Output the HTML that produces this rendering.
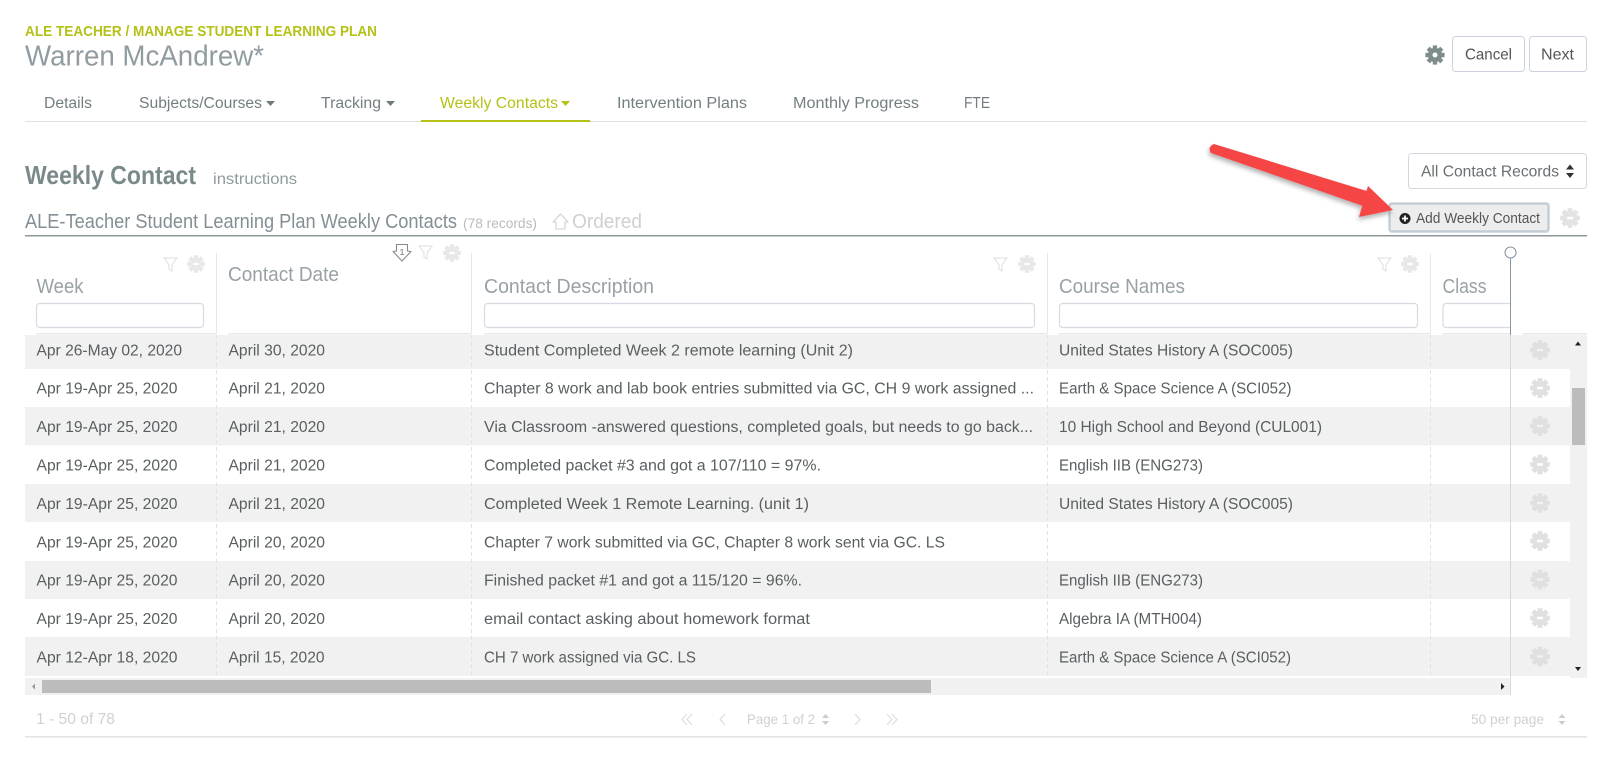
<!DOCTYPE html>
<html lang="en">
<head>
<meta charset="utf-8">
<title>Weekly Contact</title>
<style>
html,body{margin:0;padding:0;background:#fff;width:1600px;height:764px;overflow:hidden}
svg{display:block}
text{font-family:"Liberation Sans",Arial,sans-serif;white-space:pre}
.r{font-size:15.5px;fill:#595f61}
.h{font-size:20.5px;fill:#98a2a6}
.tab{font-size:15.5px;fill:#737e81}
.p{fill:#d0d0d0}
.inp{fill:#fff;stroke:#d5dbe3;stroke-width:1.2}
.fl{fill:none;stroke:#e2e4e4;stroke-width:1.2}
</style>
</head>
<body>
<svg xmlns="http://www.w3.org/2000/svg" width="1600" height="764" viewBox="0 0 1600 764">
<defs>
<symbol id="cog" viewBox="-10 -10 20 20" overflow="visible">
<circle r="4.8" fill="none" stroke="currentColor" stroke-width="4.6"/>
<g fill="currentColor">
<rect x="-2.2" y="-9.6" width="4.4" height="4"/>
<rect x="-2.2" y="-9.6" width="4.4" height="4" transform="rotate(45)"/>
<rect x="-2.2" y="-9.6" width="4.4" height="4" transform="rotate(90)"/>
<rect x="-2.2" y="-9.6" width="4.4" height="4" transform="rotate(135)"/>
<rect x="-2.2" y="-9.6" width="4.4" height="4" transform="rotate(180)"/>
<rect x="-2.2" y="-9.6" width="4.4" height="4" transform="rotate(225)"/>
<rect x="-2.2" y="-9.6" width="4.4" height="4" transform="rotate(270)"/>
<rect x="-2.2" y="-9.6" width="4.4" height="4" transform="rotate(315)"/>
</g>
</symbol>
<symbol id="cog2" viewBox="-10 -10 20 20" overflow="visible">
<path fill-rule="evenodd" fill="currentColor" d="M-7-7H7V7H-7ZM-3-1.200V1.200H3V-1.200Z" clip-path="circle(7.400px)"/>
<g fill="currentColor">
<rect x="-2.400" y="-9.800" width="4.800" height="4"/>
<rect x="-2.400" y="-9.800" width="4.800" height="4" transform="rotate(45)"/>
<rect x="-2.400" y="-9.800" width="4.800" height="4" transform="rotate(90)"/>
<rect x="-2.400" y="-9.800" width="4.800" height="4" transform="rotate(135)"/>
<rect x="-2.400" y="-9.800" width="4.800" height="4" transform="rotate(180)"/>
<rect x="-2.400" y="-9.800" width="4.800" height="4" transform="rotate(225)"/>
<rect x="-2.400" y="-9.800" width="4.800" height="4" transform="rotate(270)"/>
<rect x="-2.400" y="-9.800" width="4.800" height="4" transform="rotate(315)"/>
</g>
</symbol>
<filter id="sh" x="-10%" y="-20%" width="120%" height="150%"><feDropShadow dx="-1" dy="3" stdDeviation="2.500" flood-color="#000" flood-opacity=".3"/></filter>
</defs>

<!-- header -->
<text x="25" y="36" font-size="15" font-weight="700" fill="#b4c117" textLength="352" lengthAdjust="spacingAndGlyphs">ALE TEACHER / MANAGE STUDENT LEARNING PLAN</text>
<text x="25" y="65.500" font-size="29" fill="#909ca1" textLength="239" lengthAdjust="spacingAndGlyphs">Warren McAndrew*</text>

<use href="#cog" x="1425" y="45" width="20" height="20" color="#7f8c8d"/>
<rect x="1452.500" y="36.500" width="72" height="35" rx="3" fill="#fff" stroke="#ccd3dc"/>
<text x="1465" y="59.500" font-size="16" fill="#555" textLength="47" lengthAdjust="spacingAndGlyphs">Cancel</text>
<rect x="1529.500" y="36.500" width="57" height="35" rx="3" fill="#fff" stroke="#ccd3dc"/>
<text x="1541" y="59.500" font-size="16" fill="#555" textLength="33" lengthAdjust="spacingAndGlyphs">Next</text>

<!-- tabs -->
<text class="tab" x="44" y="108" textLength="48" lengthAdjust="spacingAndGlyphs">Details</text>
<text class="tab" x="139" y="108" textLength="123" lengthAdjust="spacingAndGlyphs">Subjects/Courses</text>
<path d="M266 101h9l-4.500 5z" fill="#6f7a7d"/>
<text class="tab" x="321" y="108" textLength="60" lengthAdjust="spacingAndGlyphs">Tracking</text>
<path d="M386 101h9l-4.500 5z" fill="#6f7a7d"/>
<text class="tab" x="440" y="108" textLength="118" lengthAdjust="spacingAndGlyphs" style="fill:#b4c117">Weekly Contacts</text>
<path d="M561 101h9l-4.500 5z" fill="#b4c117"/>
<text class="tab" x="617" y="108" textLength="130" lengthAdjust="spacingAndGlyphs">Intervention Plans</text>
<text class="tab" x="793" y="108" textLength="126" lengthAdjust="spacingAndGlyphs">Monthly Progress</text>
<text class="tab" x="964" y="108" textLength="26" lengthAdjust="spacingAndGlyphs">FTE</text>
<rect x="25" y="121" width="1562" height="1" fill="#dfe2e4"/>
<rect x="421" y="120" width="169" height="2" fill="#b4c117"/>

<!-- section title -->
<text x="25" y="184" font-size="26" font-weight="700" fill="#7a8a8b" textLength="171" lengthAdjust="spacingAndGlyphs">Weekly Contact</text>
<text x="213" y="184" font-size="16" fill="#8f9a9d" textLength="84" lengthAdjust="spacingAndGlyphs">instructions</text>

<rect x="1408.500" y="153.500" width="178" height="35" rx="3" fill="#fff" stroke="#d3d9e0"/>
<text x="1421" y="176.500" font-size="16" fill="#6a6f72" textLength="138" lengthAdjust="spacingAndGlyphs">All Contact Records</text>
<path d="M1566 169.500l4 -5 4 5zM1566 173l4 5 4 -5z" fill="#333"/>

<text x="25" y="228" font-size="20" fill="#838f94" textLength="432" lengthAdjust="spacingAndGlyphs">ALE-Teacher Student Learning Plan Weekly Contacts</text>
<text x="463" y="228" font-size="14" fill="#b8bcbe" textLength="74" lengthAdjust="spacingAndGlyphs">(78 records)</text>
<path d="M560.500 214l7.500 8-3 0v7h-9v-7l-3 0z" fill="none" stroke="#cfcfcf" stroke-width="1.100" stroke-linejoin="round"/>
<text x="572" y="228" font-size="20" fill="#d0d0d0" textLength="70" lengthAdjust="spacingAndGlyphs">Ordered</text>

<rect x="25" y="235" width="1562" height="1.500" fill="#8f9698"/>

<!-- Add button -->
<rect x="1388" y="202" width="162" height="31" rx="4" fill="#d3dde5"/>
<rect x="1390" y="204" width="158" height="27" rx="2" fill="#ededed" stroke="#b4bcc4"/>
<circle cx="1405" cy="218.500" r="5.500" fill="#222"/>
<path d="M1405 215.500v6M1402 218.500h6" stroke="#fff" stroke-width="1.800"/>
<text x="1416" y="223" font-size="14.500" fill="#555" textLength="124" lengthAdjust="spacingAndGlyphs">Add Weekly Contact</text>
<use href="#cog2" x="1560" y="208" width="20" height="20" color="#e3e3e3"/>

<!-- table header -->
<g fill="#e6e9ec">
<rect x="216" y="253" width="1" height="81"/>
<rect x="471" y="253" width="1" height="81"/>
<rect x="1047" y="253" width="1" height="81"/>
<rect x="1430" y="253" width="1" height="81"/>
<rect x="36" y="333" width="180" height="1.500"/>
<rect x="228" y="333" width="243" height="1.500"/>
<rect x="484" y="333" width="563" height="1.500"/>
<rect x="1059" y="333" width="371" height="1.500"/>
<rect x="1442" y="333" width="68" height="1.500"/>
<rect x="1523" y="333" width="64" height="1.500"/>
</g>
<text class="h" x="36.500" y="293" textLength="47" lengthAdjust="spacingAndGlyphs">Week</text>
<text class="h" x="228" y="281" textLength="111" lengthAdjust="spacingAndGlyphs">Contact Date</text>
<text class="h" x="484" y="293" textLength="170" lengthAdjust="spacingAndGlyphs">Contact Description</text>
<text class="h" x="1059" y="293" textLength="126" lengthAdjust="spacingAndGlyphs">Course Names</text>
<text class="h" x="1442.500" y="293" textLength="44" lengthAdjust="spacingAndGlyphs">Class</text>
<rect class="inp" x="36.500" y="303.500" width="167" height="24" rx="3"/>
<rect class="inp" x="484.500" y="303.500" width="550" height="24" rx="3"/>
<rect class="inp" x="1059.500" y="303.500" width="358" height="24" rx="3"/>
<path class="inp" d="M1510 303.500h-64a3 3 0 0 0 -3 3v18a3 3 0 0 0 3 3h64"/>

<!-- header icons -->
<path class="fl" d="M164 258h13l-5 7v6l-3-2v-4z"/>
<use href="#cog2" x="187" y="255" width="18" height="18" color="#e8e8e8"/>
<path d="M396.500 244.500h11v6.500l3.500 0.500-9 9.500-9-9.500 3.500-0.500z" fill="none" stroke="#8a8a8a" stroke-width="1.100" stroke-linejoin="round"/>
<text x="402" y="255" font-size="8.500" fill="#666" text-anchor="middle">1</text>
<path class="fl" d="M419 246h13l-5 7v6l-3-2v-4z"/>
<use href="#cog2" x="443" y="244" width="18" height="18" color="#e8e8e8"/>
<path class="fl" d="M994 258h13l-5 7v6l-3-2v-4z"/>
<use href="#cog2" x="1018" y="255" width="18" height="18" color="#e8e8e8"/>
<path class="fl" d="M1378 258h13l-5 7v6l-3-2v-4z"/>
<use href="#cog2" x="1401" y="255" width="18" height="18" color="#e8e8e8"/>

<!-- row bands -->
<g fill="#f1f1f1">
<rect x="25" y="335" width="1545" height="34"/>
<rect x="25" y="407" width="1545" height="38.500"/>
<rect x="25" y="484" width="1545" height="38"/>
<rect x="25" y="561" width="1545" height="38"/>
<rect x="25" y="637" width="1545" height="39"/>
</g>

<!-- dashed separators -->
<g stroke="#e2e2e2" stroke-dasharray="4 3" stroke-width="1">
<path d="M216.500 335V678M471.500 335V678M1047.500 335V678M1430.500 335V678"/>
</g>

<!-- rows -->
<g class="rows">
<text class="r" x="36.500" y="355.500" textLength="145.500" lengthAdjust="spacingAndGlyphs">Apr 26-May 02, 2020</text>
<text class="r" x="228.500" y="355.500" textLength="96.500" lengthAdjust="spacingAndGlyphs">April 30, 2020</text>
<text class="r" x="484" y="355.500" textLength="369" lengthAdjust="spacingAndGlyphs">Student Completed Week 2 remote learning (Unit 2)</text>
<text class="r" x="1059" y="355.500" textLength="234" lengthAdjust="spacingAndGlyphs">United States History A (SOC005)</text>

<text class="r" x="36.500" y="393.500" textLength="141" lengthAdjust="spacingAndGlyphs">Apr 19-Apr 25, 2020</text>
<text class="r" x="228.500" y="393.500" textLength="96.500" lengthAdjust="spacingAndGlyphs">April 21, 2020</text>
<text class="r" x="484" y="393.500" textLength="550" lengthAdjust="spacingAndGlyphs">Chapter 8 work and lab book entries submitted via GC, CH 9 work assigned ...</text>
<text class="r" x="1059" y="393.500" textLength="232.500" lengthAdjust="spacingAndGlyphs">Earth &amp; Space Science A (SCI052)</text>

<text class="r" x="36.500" y="432" textLength="141" lengthAdjust="spacingAndGlyphs">Apr 19-Apr 25, 2020</text>
<text class="r" x="228.500" y="432" textLength="96.500" lengthAdjust="spacingAndGlyphs">April 21, 2020</text>
<text class="r" x="484" y="432" textLength="549" lengthAdjust="spacingAndGlyphs">Via Classroom -answered questions, completed goals, but needs to go back...</text>
<text class="r" x="1059" y="432" textLength="263" lengthAdjust="spacingAndGlyphs">10 High School and Beyond (CUL001)</text>

<text class="r" x="36.500" y="470.500" textLength="141" lengthAdjust="spacingAndGlyphs">Apr 19-Apr 25, 2020</text>
<text class="r" x="228.500" y="470.500" textLength="96.500" lengthAdjust="spacingAndGlyphs">April 21, 2020</text>
<text class="r" x="484" y="470.500" textLength="337" lengthAdjust="spacingAndGlyphs">Completed packet #3 and got a 107/110 = 97%.</text>
<text class="r" x="1059" y="470.500" textLength="144" lengthAdjust="spacingAndGlyphs">English IIB (ENG273)</text>

<text class="r" x="36.500" y="509" textLength="141" lengthAdjust="spacingAndGlyphs">Apr 19-Apr 25, 2020</text>
<text class="r" x="228.500" y="509" textLength="96.500" lengthAdjust="spacingAndGlyphs">April 21, 2020</text>
<text class="r" x="484" y="509" textLength="325" lengthAdjust="spacingAndGlyphs">Completed Week 1 Remote Learning. (unit 1)</text>
<text class="r" x="1059" y="509" textLength="234" lengthAdjust="spacingAndGlyphs">United States History A (SOC005)</text>

<text class="r" x="36.500" y="547.500" textLength="141" lengthAdjust="spacingAndGlyphs">Apr 19-Apr 25, 2020</text>
<text class="r" x="228.500" y="547.500" textLength="96.500" lengthAdjust="spacingAndGlyphs">April 20, 2020</text>
<text class="r" x="484" y="547.500" textLength="461" lengthAdjust="spacingAndGlyphs">Chapter 7 work submitted via GC, Chapter 8 work sent via GC. LS</text>

<text class="r" x="36.500" y="585.500" textLength="141" lengthAdjust="spacingAndGlyphs">Apr 19-Apr 25, 2020</text>
<text class="r" x="228.500" y="585.500" textLength="96.500" lengthAdjust="spacingAndGlyphs">April 20, 2020</text>
<text class="r" x="484" y="585.500" textLength="318" lengthAdjust="spacingAndGlyphs">Finished packet #1 and got a 115/120 = 96%.</text>
<text class="r" x="1059" y="585.500" textLength="144" lengthAdjust="spacingAndGlyphs">English IIB (ENG273)</text>

<text class="r" x="36.500" y="624" textLength="141" lengthAdjust="spacingAndGlyphs">Apr 19-Apr 25, 2020</text>
<text class="r" x="228.500" y="624" textLength="96.500" lengthAdjust="spacingAndGlyphs">April 20, 2020</text>
<text class="r" x="484" y="624" textLength="326" lengthAdjust="spacingAndGlyphs">email contact asking about homework format</text>
<text class="r" x="1059" y="624" textLength="143" lengthAdjust="spacingAndGlyphs">Algebra IA (MTH004)</text>

<text class="r" x="36.500" y="662.500" textLength="141" lengthAdjust="spacingAndGlyphs">Apr 12-Apr 18, 2020</text>
<text class="r" x="228.500" y="662.500" textLength="96" lengthAdjust="spacingAndGlyphs">April 15, 2020</text>
<text class="r" x="484" y="662.500" textLength="212" lengthAdjust="spacingAndGlyphs">CH 7 work assigned via GC. LS</text>
<text class="r" x="1059" y="662.500" textLength="232" lengthAdjust="spacingAndGlyphs">Earth &amp; Space Science A (SCI052)</text>
</g>

<!-- frozen column gears -->
<g color="#e0e0e0">
<use href="#cog2" x="1530" y="340" width="20" height="20"/>
<use href="#cog2" x="1530" y="378" width="20" height="20"/>
<use href="#cog2" x="1530" y="416" width="20" height="20"/>
<use href="#cog2" x="1530" y="454.500" width="20" height="20"/>
<use href="#cog2" x="1530" y="493" width="20" height="20"/>
<use href="#cog2" x="1530" y="531" width="20" height="20"/>
<use href="#cog2" x="1530" y="569.500" width="20" height="20"/>
<use href="#cog2" x="1530" y="608" width="20" height="20"/>
<use href="#cog2" x="1530" y="646.500" width="20" height="20"/>
</g>

<!-- vertical scrollbar -->
<rect x="1570" y="335" width="17" height="343" fill="#f1f1f1"/>
<rect x="1572" y="388" width="13" height="57" fill="#bcbcbc"/>
<path d="M1575 345.500l3-4 3 4z" fill="#222"/>
<path d="M1575 667l3 4 3-4z" fill="#222"/>

<!-- horizontal scrollbar -->
<rect x="25" y="678" width="1486" height="17" fill="#f1f1f1"/>
<rect x="42" y="680" width="889" height="13" fill="#bcbcbc"/>
<path d="M35 683.500l-3 3 3 3z" fill="#999"/>
<path d="M1501 683l3.500 3.500-3.500 3.500z" fill="#222"/>

<!-- frozen line -->
<rect x="1510" y="335" width="1" height="360" fill="#d4d8dc"/>
<rect x="1510" y="258" width="1" height="77" fill="#8796a5"/>
<circle cx="1510.500" cy="252.500" r="5.500" fill="#fff" stroke="#8796a5" stroke-width="1.100"/>

<!-- footer -->
<text x="36" y="724" font-size="15.500" class="p" textLength="79" lengthAdjust="spacingAndGlyphs">1 - 50 of 78</text>
<g fill="none" stroke="#dcdcdc" stroke-width="1.100">
<path d="M687 714l-5 5.500 5 5.500M692 714l-5 5.500 5 5.500"/>
<path d="M725 714l-5 5.500 5 5.500"/>
<path d="M855 714l5 5.500-5 5.500"/>
<path d="M887 714l5 5.500-5 5.500M892 714l5 5.500-5 5.500"/>
</g>
<text x="747" y="724" font-size="14" class="p" textLength="68" lengthAdjust="spacingAndGlyphs">Page 1 of 2</text>
<path d="M822 718l3.500-4 3.500 4zM822 721l3.500 4 3.500-4z" fill="#ccc"/>
<text x="1471" y="724" font-size="14" class="p" textLength="73" lengthAdjust="spacingAndGlyphs">50 per page</text>
<path d="M1558.500 718l3.500-4 3.500 4zM1558.500 721l3.500 4 3.500-4z" fill="#ccc"/>
<rect x="25" y="736" width="1562" height="1.500" fill="#e2e2e2"/>

<!-- red arrow -->
<g filter="url(#sh)">
<path d="M1214 144L1370 192L1366 207L1211 153Q1207 147 1214 144Z" fill="#f54545"/>
<path d="M1368 186L1393 210L1359 217Z" fill="#f54545"/>
</g>
</svg>
</body>
</html>
